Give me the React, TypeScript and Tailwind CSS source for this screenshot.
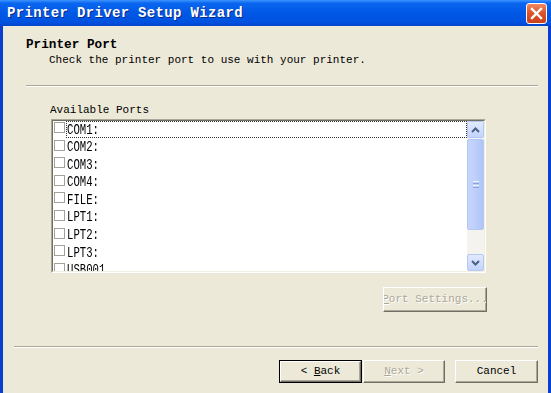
import React from "react";

const ports = ["COM1:", "COM2:", "COM3:", "COM4:", "FILE:", "LPT1:", "LPT2:", "LPT3:", "USB001"];

const mono = "font-['Liberation_Mono',monospace]";

function PortRow({ name, focused }: { name: string; focused: boolean }) {
  return (
    <div className="flex h-[17.6px] shrink-0 items-start">
      <div className="ml-[1px] mt-[1px] h-[11px] w-[11px] shrink-0 border border-[#a5a29a] bg-white" />
      <div
        className={`ml-[1px] flex h-[17px] flex-1 items-center border ${
          focused ? "border-dotted border-[#333]" : "border-transparent"
        }`}
      >
        <span className={`${mono} inline-block origin-left scale-x-[0.76] text-[14px] leading-none text-black`}>
          {name}
        </span>
      </div>
    </div>
  );
}

function ScrollArrow({ up }: { up: boolean }) {
  return (
    <div className="flex h-[17px] w-[17px] items-center justify-center rounded-[2px] border border-[#b4c8f6] bg-[linear-gradient(to_bottom,#e1eafe,#c3d4fd)]">
      <svg width="9" height="6" viewBox="0 0 9 6">
        <path
          d={up ? "M1 5 L4.5 1.5 L8 5" : "M1 1 L4.5 4.5 L8 1"}
          fill="none"
          stroke="#4d6185"
          strokeWidth="2"
        />
      </svg>
    </div>
  );
}

function Button({
  children,
  width,
  disabled,
  isDefault,
}: {
  children: React.ReactNode;
  width: string;
  disabled?: boolean;
  isDefault?: boolean;
}) {
  return (
    <div className={`${width} h-full ${isDefault ? "border border-black" : ""}`}>
      <div className="flex h-full w-full items-center justify-center overflow-hidden border-t border-l border-r border-b border-t-white border-l-white border-r-[#716f64] border-b-[#716f64] bg-[#ece9d8] shadow-[inset_-1px_-1px_0_#aca899]">
        <span
          className={`${mono} whitespace-nowrap text-[11px] leading-none ${
            disabled ? "text-[#aca899] [text-shadow:1px_1px_0_#fff]" : "text-black"
          }`}
        >
          {children}
        </span>
      </div>
    </div>
  );
}

export default function App() {
  return (
    <div className="flex h-[393px] w-[551px] flex-col overflow-hidden bg-[#0b3ecf]">
      {/* title bar */}
      <div className="flex h-[26px] shrink-0 items-center justify-between bg-[linear-gradient(to_bottom,#3d95ff_0%,#0a66ef_12%,#0058e6_50%,#0052e0_85%,#0044cc_100%)] pl-[7px] pr-[4px]">
        <span className={`${mono} text-[14px] font-bold leading-none tracking-[0.34px] text-white [text-shadow:1px_1px_0_#0a2a8a]`}>
          Printer Driver Setup Wizard
        </span>
        <div className="flex h-[21px] w-[21px] items-center justify-center rounded-[3px] border border-white bg-[linear-gradient(to_bottom,#f08a60,#e0542a_45%,#cc3f1a)]">
          <svg width="13" height="13" viewBox="0 0 13 13">
            <path d="M2 2 L11 11 M11 2 L2 11" stroke="#fff" strokeWidth="2.4" strokeLinecap="square" />
          </svg>
        </div>
      </div>

      {/* body */}
      <div className="mx-[3px] flex flex-1 flex-col bg-[#ece9d8]">
        <div className={`${mono} pl-[23px] pt-[12px] text-[12.7px] font-bold leading-[14px] text-black`}>Printer Port</div>
        <div className={`${mono} mt-[1px] pl-[46px] text-[11px] leading-[14px] text-black`}>
          Check the printer port to use with your printer.
        </div>
        <div className="ml-[23px] mr-[10px] mt-[18px] h-[2px] border-t border-b border-t-[#aca899] border-b-white" />

        <div className={`${mono} mt-[16px] pl-[47px] text-[11px] leading-[14px] text-black`}>Available Ports</div>

        {/* list box */}
        <div className="ml-[48px] mt-[2px] h-[154px] w-[435px] border border-t-[#aca899] border-l-[#aca899] border-r-white border-b-white">
          <div className="flex h-full w-full border border-t-[#716f64] border-l-[#716f64] border-r-[#f1efe2] border-b-[#f1efe2] bg-white">
            <div className="flex flex-1 flex-col overflow-hidden">
              {ports.map((p, i) => (
                <PortRow key={p} name={p} focused={i === 0} />
              ))}
            </div>
            {/* scrollbar */}
            <div className="flex w-[17px] flex-col bg-[#f4f3ee]">
              <ScrollArrow up />
              <div className="mt-[1px] flex h-[91px] items-center justify-center rounded-[2px] border border-[#b4c8f6] bg-[linear-gradient(to_right,#c8d6fb,#bccefa_50%,#b0c4f6)]">
                <div className="flex flex-col gap-[1px]">
                  <div className="h-[1px] w-[6px] bg-[#eef3fe]" />
                  <div className="h-[1px] w-[6px] bg-[#8ca4dc]" />
                  <div className="h-[1px] w-[6px] bg-[#eef3fe]" />
                  <div className="h-[1px] w-[6px] bg-[#8ca4dc]" />
                </div>
              </div>
              <div className="flex-1" />
              <ScrollArrow up={false} />
            </div>
          </div>
        </div>

        <div className="ml-[380px] mt-[14px] h-[25px]">
          <Button width="w-[104px]" disabled>
            <span className="underline">P</span>ort Settings...
          </Button>
        </div>

        <div className="ml-[11px] mr-[10px] mt-[34px] h-[2px] border-t border-b border-t-[#aca899] border-b-white" />

        <div className="mr-[10px] mt-[12px] flex h-[23px] justify-end">
          <Button width="w-[83px]" isDefault>
            &lt; <span className="underline">B</span>ack
          </Button>
          <div className="ml-[1px]">
            <div className="h-[23px]">
              <Button width="w-[82px]" disabled>
                <span className="underline">N</span>ext &gt;
              </Button>
            </div>
          </div>
          <div className="ml-[10px] h-[23px]">
            <Button width="w-[83px]">Cancel</Button>
          </div>
        </div>
      </div>
    </div>
  );
}
